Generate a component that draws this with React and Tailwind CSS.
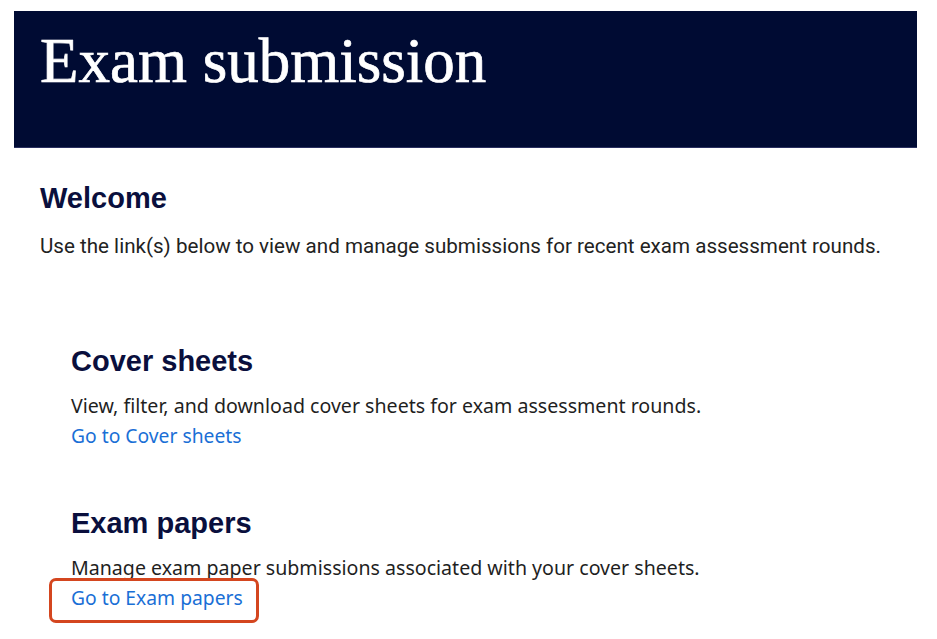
import React from 'react'

const sections = [
  {
    title: 'Cover sheets',
    text: 'View, filter, and download cover sheets for exam assessment rounds.',
    link: 'Go to Cover sheets',
  },
  {
    title: 'Exam papers',
    text: 'Manage exam paper submissions associated with your cover sheets.',
    link: 'Go to Exam papers',
    highlight: true,
  },
]

const Section = ({ title, text, link, highlight }) => (
  <div className="pl-[31px]">
    <h2 className="font-['Liberation_Sans',Arial,sans-serif] font-bold text-[29px] leading-[32px] text-[#0a0f3d]">
      {title}
    </h2>
    <p className="mt-[14px] font-['Noto_Sans',sans-serif] text-[19.6px] leading-[30px] text-[#1f1f1f]">
      {text}
    </p>
    <div className="relative inline-block">
      <a href="#" className="font-['Noto_Sans',sans-serif] text-[19.3px] leading-[30px] text-[#1a6fd6]">
        {link}
      </a>
      {highlight && (
        <span className="absolute -left-[22px] -right-[16px] -top-[5px] -bottom-[10px] border-[3px] border-[#d4461f] rounded-[7px]" />
      )}
    </div>
  </div>
)

export default function App() {
  return (
    <div className="min-h-screen bg-white pt-[11px] pl-[14px] pr-[20px]">
      <header className="h-[137px] bg-[#000b33] border-b border-[#2a3060] pl-[26px]">
        <h1 className="font-['Liberation_Serif','Times_New_Roman',serif] text-[63px] leading-[1] pt-[19px] text-white [-webkit-text-stroke:0.7px_white]">
          Exam submission
        </h1>
      </header>
      <main className="px-[26px] pt-[34px]">
        <h2 className="font-['Liberation_Sans',Arial,sans-serif] font-bold text-[29px] leading-[32px] text-[#0a0f3d]">
          Welcome
        </h2>
        <p className="mt-[18px] font-['Roboto',sans-serif] text-[20.6px] leading-[28px] text-[#222]">
          Use the link(s) below to view and manage submissions for recent exam assessment rounds.
        </p>
        <div className="mt-[85px] flex flex-col gap-[56px]">
          {sections.map(s => (
            <Section key={s.title} {...s} />
          ))}
        </div>
      </main>
    </div>
  )
}
